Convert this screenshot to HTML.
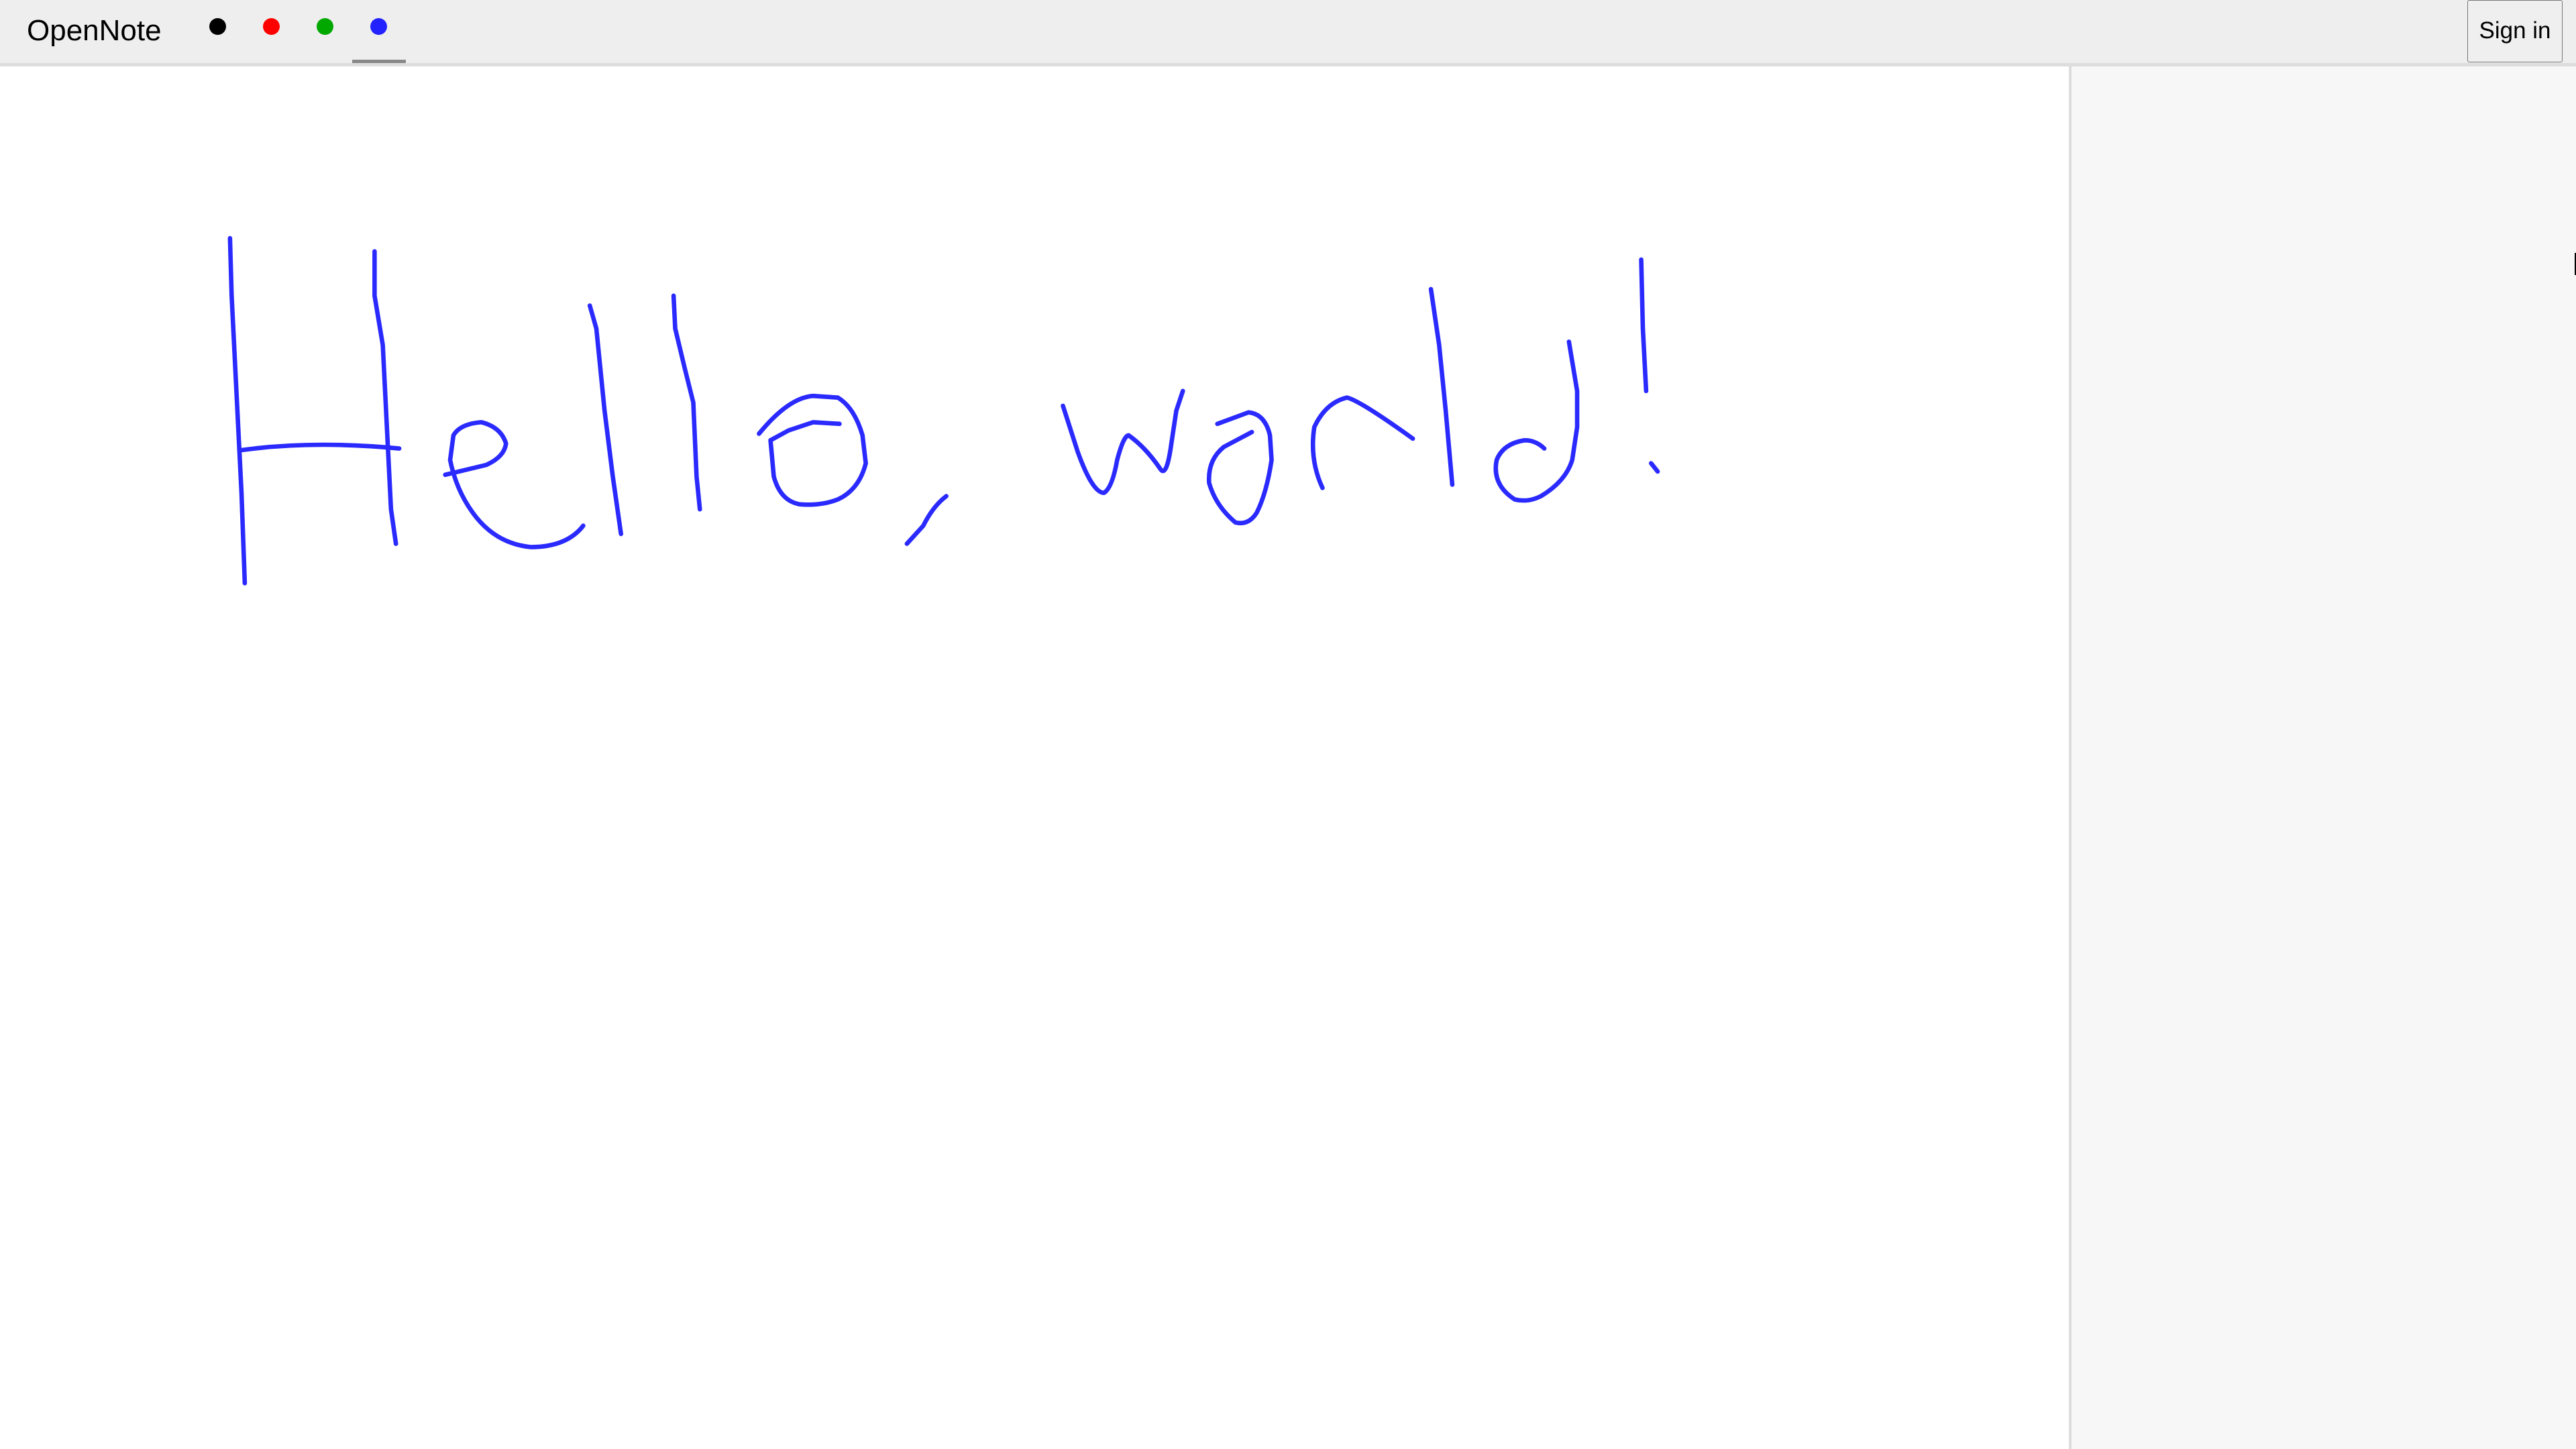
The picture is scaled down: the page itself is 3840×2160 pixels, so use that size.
<!DOCTYPE html>
<html><head><meta charset="utf-8"><style>
html,body{margin:0;padding:0;width:3840px;height:2160px;overflow:hidden;background:#fff;font-family:"Liberation Sans",Arial,sans-serif;}
#hdr{position:absolute;left:0;top:0;width:3840px;height:94px;background:#eeeeee;border-bottom:5px solid #dddddd;}
#logo{position:absolute;left:40px;top:0;font-size:44px;color:#000;line-height:92px;}
.dot{position:absolute;top:27px;width:25px;height:25px;border-radius:50%;}
#ul{position:absolute;left:525px;top:89px;width:80px;height:5px;background:#888;}
#sign{position:absolute;left:3678px;top:0;width:142px;height:93px;border:1px solid #767676;border-radius:3px;background:#efefef;font-size:35px;line-height:90px;text-align:center;color:#000;box-sizing:border-box;}
#side{position:absolute;left:3084px;top:99px;width:756px;height:2061px;background:#f7f7f7;border-left:4px solid #dddddd;box-sizing:border-box;}
#cur{position:absolute;left:3838px;top:377px;width:2px;height:33px;background:#000;}
svg{position:absolute;left:0;top:0;}
</style></head><body>
<div id="hdr">
<div id="logo">OpenNote</div>
<div class="dot" style="left:312px;background:#000"></div>
<div class="dot" style="left:392px;background:#ff0000"></div>
<div class="dot" style="left:472px;background:#00a800"></div>
<div class="dot" style="left:552px;background:#2222ff"></div>
<div id="ul"></div>
<div id="sign">Sign in</div>
</div>
<div id="side"></div>
<div id="cur"></div>
<svg width="3840" height="2160" viewBox="0 0 1568 882" fill="none" stroke="#2a2aff" stroke-width="2.7" stroke-linecap="round" stroke-linejoin="round">
<path d="M140,145 L141,180 L144,240 L147,300 L149,355"/>
<path d="M228,153 L228,180 L233,210 L236,270 L238,310 L241,331"/>
<path d="M147,274 Q190,268 243,273"/>
<path d="M271,289 L296,283 Q307,278 308,270 Q305,260 293,257 Q280,258 276,265 L274,280 Q278,300 290,315 Q303,331 323,333 Q345,333 355,320"/>
<path d="M359,186 L363,200 L368,250 L373,290 L378,325"/>
<path d="M410,180 L411,200 L417,225 L422,245 L424,290 L426,310"/>
<path d="M462,264 Q480,242 495,241 L510,242 Q520,248 525,265 L527,282 Q523,298 510,304 Q500,308 487,307 Q475,305 471,290 L469,268 L480,262 L495,257 L511,258"/>
<path d="M576,302 Q568,308 562,320 L552,331"/>
<path d="M647,247 L656,275 Q665,300 672,300 Q677,297 680,280 Q684,265 687,265 Q697,272 706,285 Q710,292 713,270 L716,250 L720,238"/>
<path d="M741,258 L760,251 Q770,252 773,265 L774,280 Q771,300 765,312 Q760,320 752,318 Q740,308 736,294 Q735,280 745,272 L762,263"/>
<path d="M805,297 Q797,280 800,260 Q807,245 820,242 Q828,244 860,267"/>
<path d="M871,176 L876,210 L880,250 L884,295"/>
<path d="M940,273 Q935,268 928,268 Q915,270 911,280 Q908,295 922,304 Q930,306 938,302 Q953,293 957,280 L960,260 L960,238 L955,208"/>
<path d="M999,158 L1000,200 L1002,238"/>
<path d="M1005,282 L1009,287"/>
</svg>
</body></html>
